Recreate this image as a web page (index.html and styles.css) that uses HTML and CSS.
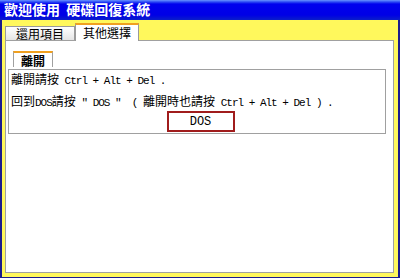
FILE: index.html
```html
<!DOCTYPE html>
<html lang="zh-Hant">
<head>
<meta charset="UTF-8" />
<title>歡迎使用 硬碟回復系統</title>
<link rel="stylesheet" href="styles.css">
</head>
<body>

<div class="window">
  <div class="titlebar">歡迎使用&nbsp;&nbsp;硬碟回復系統</div>
  <div class="client">
    <div class="tabs">
      <div class="tab">還用項目</div>
      <div class="tab active">其他選擇</div>
    </div>
    <div class="panel">
      <div class="group-tab">離開</div>
      <div class="group">
        <p class="line">離開請按<span class="mono"> Ctrl + Alt + Del .</span></p>
        <p class="line">回到<span class="mono">DOS</span>請按<span class="mono"> " DOS "  ( </span>離開時也請按<span class="mono"> Ctrl + Alt + Del ) .</span></p>
        <div class="actions">
          <button class="dos-btn">DOS</button>
        </div>
      </div>
    </div>
  </div>
</div>

</body>
</html>
```

FILE: styles.css
```css
body {
  margin: 0;
  font-family: "Noto Sans CJK TC", "Liberation Sans", sans-serif;
  font-size: 12px;
  color: #000;
  background: #fff;
}
.window {
  width: 400px;
  height: 278px;
  box-sizing: border-box;
  background: #1c1c8e;
  padding: 0 2px 1px 2px;
  display: flex;
  flex-direction: column;
}
.titlebar {
  margin: 0 -2px;
  height: 20px;
  line-height: 19px;
  padding-left: 4px;
  color: #fff;
  font-weight: bold;
  font-size: 14px;
  white-space: nowrap;
  background: linear-gradient(#6a94ff 0, #2a48f4 2px, #0000ee 4px, #0000e6 15px, #0a1ec8 20px);
}
.client {
  flex: 1;
  background: #fff85c;
  padding: 3px 4px 4px 3px;
  display: flex;
  flex-direction: column;
}
.tabs {
  display: flex;
  align-items: flex-end;
  height: 17px;
}
.tab {
  box-sizing: border-box;
  width: 70px;
  height: 14px;
  line-height: 14px;
  text-align: center;
  white-space: nowrap;
  border: 1px solid #9a9a9a;
  border-bottom: none;
  background: linear-gradient(#ffffff, #e4e4e4);
}
.tab.active {
  width: 64px;
  height: 18px;
  line-height: 16px;
  border-top: 2px solid #f0a020;
  background: #fff;
  position: relative;
  top: 1px;
  z-index: 1;
}
.panel {
  flex: 1;
  background: #fff;
  border: 1px solid #a0a0a0;
  padding: 10px 7px 0 2px;
}
.group-tab {
  display: inline-block;
  margin-left: 5px;
  height: 14px;
  line-height: 15px;
  padding: 0 7px;
  font-weight: bold;
  border: 1px solid #a0a0a0;
  border-top: 2px solid #f0a020;
  border-bottom: none;
}
.group {
  border: 1px solid #a0a0a0;
  padding: 1px 2px 0 2px;
  height: 62px;
}
.line {
  margin: 0;
  height: 22px;
  line-height: 16px;
  white-space: pre;
}
.mono {
  font-family: "Liberation Mono", monospace;
  font-size: 11px;
  letter-spacing: -1px;
}
.actions {
  display: flex;
  justify-content: center;
  margin-top: -4px;
  padding-left: 7px;
}
.dos-btn {
  width: 68px;
  height: 21px;
  border: 2px solid #a01c1c;
  background: #fff;
  font-family: "Liberation Mono", monospace;
  font-size: 12px;
  color: #000;
  padding: 0;
}
```
